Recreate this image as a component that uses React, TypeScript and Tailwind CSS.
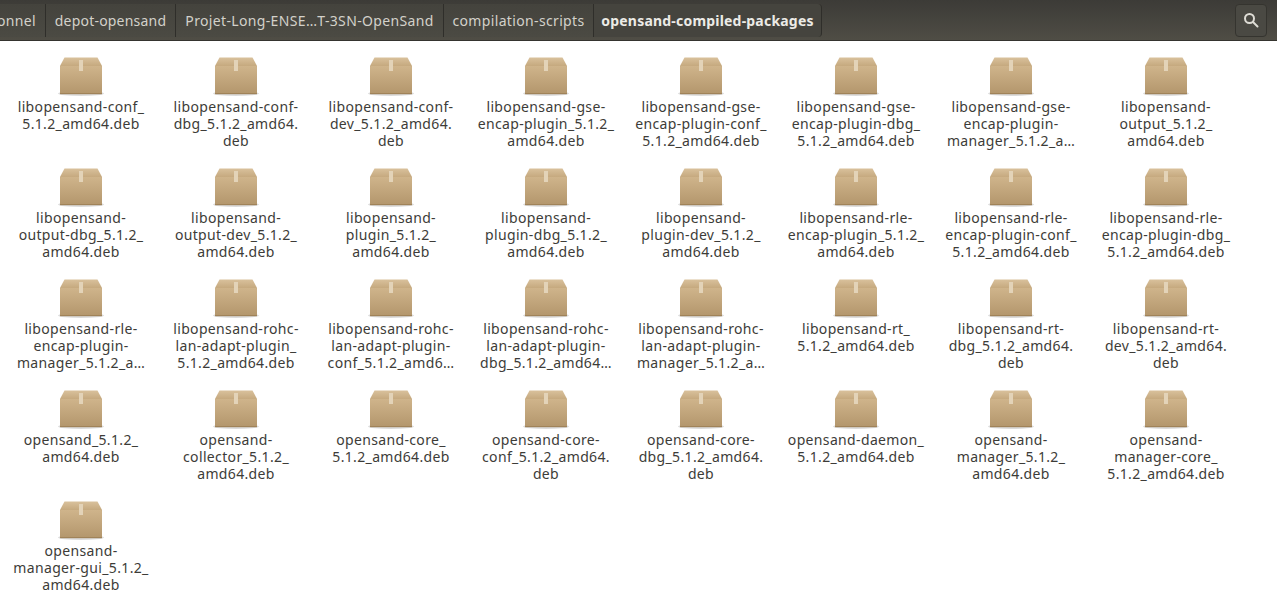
import React from "react";

const items: string[][] = [
  ["libopensand-conf_", "5.1.2_amd64.deb"],
  ["libopensand-conf-", "dbg_5.1.2_amd64.", "deb"],
  ["libopensand-conf-", "dev_5.1.2_amd64.", "deb"],
  ["libopensand-gse-", "encap-plugin_5.1.2_", "amd64.deb"],
  ["libopensand-gse-", "encap-plugin-conf_", "5.1.2_amd64.deb"],
  ["libopensand-gse-", "encap-plugin-dbg_", "5.1.2_amd64.deb"],
  ["libopensand-gse-", "encap-plugin-", "manager_5.1.2_a…"],
  ["libopensand-", "output_5.1.2_", "amd64.deb"],
  ["libopensand-", "output-dbg_5.1.2_", "amd64.deb"],
  ["libopensand-", "output-dev_5.1.2_", "amd64.deb"],
  ["libopensand-", "plugin_5.1.2_", "amd64.deb"],
  ["libopensand-", "plugin-dbg_5.1.2_", "amd64.deb"],
  ["libopensand-", "plugin-dev_5.1.2_", "amd64.deb"],
  ["libopensand-rle-", "encap-plugin_5.1.2_", "amd64.deb"],
  ["libopensand-rle-", "encap-plugin-conf_", "5.1.2_amd64.deb"],
  ["libopensand-rle-", "encap-plugin-dbg_", "5.1.2_amd64.deb"],
  ["libopensand-rle-", "encap-plugin-", "manager_5.1.2_a…"],
  ["libopensand-rohc-", "lan-adapt-plugin_", "5.1.2_amd64.deb"],
  ["libopensand-rohc-", "lan-adapt-plugin-", "conf_5.1.2_amd6…"],
  ["libopensand-rohc-", "lan-adapt-plugin-", "dbg_5.1.2_amd64…"],
  ["libopensand-rohc-", "lan-adapt-plugin-", "manager_5.1.2_a…"],
  ["libopensand-rt_", "5.1.2_amd64.deb"],
  ["libopensand-rt-", "dbg_5.1.2_amd64.", "deb"],
  ["libopensand-rt-", "dev_5.1.2_amd64.", "deb"],
  ["opensand_5.1.2_", "amd64.deb"],
  ["opensand-", "collector_5.1.2_", "amd64.deb"],
  ["opensand-core_", "5.1.2_amd64.deb"],
  ["opensand-core-", "conf_5.1.2_amd64.", "deb"],
  ["opensand-core-", "dbg_5.1.2_amd64.", "deb"],
  ["opensand-daemon_", "5.1.2_amd64.deb"],
  ["opensand-", "manager_5.1.2_", "amd64.deb"],
  ["opensand-", "manager-core_", "5.1.2_amd64.deb"],
  ["opensand-", "manager-gui_5.1.2_", "amd64.deb"],
];

function PackageIcon() {
  return (
    <svg width="48" height="42" viewBox="0 0 48 42" className="block">
      <defs>
        <linearGradient id="boxFront" x1="0" y1="0" x2="0" y2="1">
          <stop offset="0" stopColor="#cfb48b" />
          <stop offset="1" stopColor="#b3966c" />
        </linearGradient>
        <linearGradient id="boxTop" x1="0" y1="0" x2="0" y2="1">
          <stop offset="0" stopColor="#d9c19c" />
          <stop offset="1" stopColor="#c3a67b" />
        </linearGradient>
      </defs>
      <ellipse cx="24" cy="36.5" rx="23" ry="2.5" fill="#000" opacity="0.14" />
      <path d="M7.5 0.5 H40.5 L45 9 V10 H3 V9 Z" fill="url(#boxTop)" />
      <rect x="3" y="9" width="42" height="28" rx="1" fill="url(#boxFront)" />
      <rect x="3" y="36" width="42" height="1.2" fill="#a08359" />
      <rect x="22" y="3" width="4" height="11" fill="#e3d3b8" />
    </svg>
  );
}

function Segment({ children, className = "" }: { children: React.ReactNode; className?: string }) {
  return (
    <div
      className={
        "h-[33px] flex items-center justify-center shrink-0 border-r border-[#2f2e2a] whitespace-nowrap " + className
      }
    >
      {children}
    </div>
  );
}

const plain = "text-[#d3d1ca] bg-gradient-to-b from-[#44433d] to-[#4b4a43] ";

export default function App() {
  return (
    <div className="w-[1277px] h-[616px] overflow-hidden bg-white text-[14px] font-['Noto_Sans','Open_Sans',sans-serif]">
      <header className="h-[41px] border-b border-[#35342f] bg-gradient-to-b from-[#3c3b37] to-[#4f4d45] flex items-center">
        <nav className="w-[822px] flex justify-end overflow-hidden">
          <Segment className={plain + "px-[9px] tracking-[0.35px]"}>Dossier personnel</Segment>
          <Segment className={plain + "w-[130px] tracking-[0.2px]"}>depot-opensand</Segment>
          <Segment className={plain + "w-[268px] tracking-[0.35px]"}>Projet-Long-ENSE…T-3SN-OpenSand</Segment>
          <Segment className={plain + "w-[150px] tracking-[0.35px]"}>compilation-scripts</Segment>
          <Segment className="w-[228px] font-bold tracking-[0.2px] text-[#ecebe6] bg-[#45443e] rounded-r-[4px]">
            opensand-compiled-packages
          </Segment>
        </nav>
        <div className="ml-[413px] w-[32px] h-[33px] rounded-[4px] border border-[#35342f] bg-[#4a4943] flex items-center justify-center">
          <svg width="16" height="16" viewBox="0 0 16 16" fill="none" stroke="#dedcd5" strokeWidth="2">
            <circle cx="6.5" cy="6.5" r="4.5" />
            <path d="M10 10 L14.5 14.5" strokeLinecap="round" />
          </svg>
        </div>
      </header>
      <main className="ml-[3px] pt-[16px] grid grid-cols-[repeat(8,155px)] auto-rows-[111px]">
        {items.map((lines, i) => (
          <div key={i} className="flex flex-col items-center">
            <PackageIcon />
            <div className="-mt-[1px] pl-[1px] leading-[17px] text-center text-[#3d3c38] whitespace-nowrap tracking-[0.35px]">
              {lines.map((l, j) => (
                <div key={j}>{l}</div>
              ))}
            </div>
          </div>
        ))}
      </main>
    </div>
  );
}
